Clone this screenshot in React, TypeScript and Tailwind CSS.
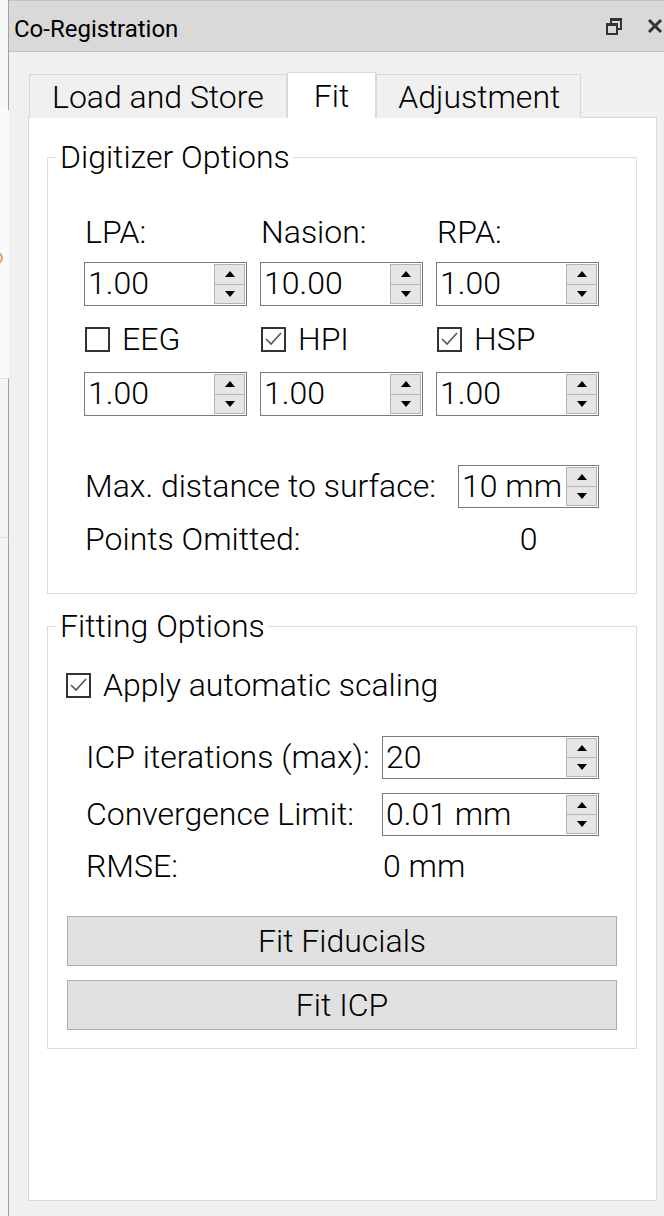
/**
 * Co-Registration dock: Fit tab with digitizer and fitting options.
 */

function Tri({ up }: { up?: boolean }) {
  return (
    <svg width="10" height="6" viewBox="0 0 10 6" className="block">
      <polygon points={up ? "5,0 10,6 0,6" : "0,0 10,0 5,6"} fill="#000" />
    </svg>
  );
}

function SpinBox({ value, tall, className }: { value: string; tall?: boolean; className?: string }) {
  return (
    <div className={`flex ${tall ? "h-[44px]" : "h-[43px]"} border border-[#7a7a7a] bg-white ${className ?? ""}`}>
      <div className="flex-1 overflow-hidden whitespace-nowrap pl-[3px] text-[32px] leading-[41px]">{value}</div>
      <div className="flex w-[32px] flex-col py-px pr-px">
        <div className="flex flex-1 items-center justify-center border border-[#b4b4b4] bg-[#e6e6e6]">
          <Tri up />
        </div>
        <div className="flex flex-1 items-center justify-center border border-t-0 border-[#b4b4b4] bg-[#e6e6e6]">
          <Tri />
        </div>
      </div>
    </div>
  );
}

function CheckBox({ checked, label, className }: { checked?: boolean; label: string; className?: string }) {
  return (
    <div className={`flex h-[33px] items-center ${className ?? ""}`}>
      <div className="h-[25px] w-[25px] border-2 border-[#333] bg-white">
        {checked && (
          <svg viewBox="0 0 21 21" className="h-full w-full">
            <polyline points="3,10 8,15 18,4" fill="none" stroke="#555" strokeWidth="1.6" />
          </svg>
        )}
      </div>
      <span className="ml-[12px] text-[32px] leading-[33px]">{label}</span>
    </div>
  );
}

function Group({ title, className, children }: { title: string; className?: string; children: React.ReactNode }) {
  return (
    <fieldset className={`border border-[#dcdcdc] ${className ?? ""}`}>
      <legend className="ml-[9px] px-[3px] text-[32px] leading-[32px]">{title}</legend>
      {children}
    </fieldset>
  );
}

function TitleBar() {
  return (
    <div className="flex h-[52px] items-center border-y border-[#c4c4c4] bg-[#d9d9d9] pl-[5px] pr-[1px]">
      <span className="flex-1 pt-[5px] text-[24px]">Co-Registration</span>
      <svg width="18" height="18" viewBox="0 0 18 18" className="mr-[24px]">
        <path d="M6 6 V2 H16 V12 H12" fill="none" stroke="#333" strokeWidth="2" />
        <rect x="5" y="1" width="12" height="3" fill="#333" />
        <rect x="2" y="7" width="10" height="10" fill="#d9d9d9" stroke="#333" strokeWidth="2" />
        <rect x="1" y="6" width="12" height="3" fill="#333" />
      </svg>
      <svg width="16" height="16" viewBox="0 0 16 16">
        <path d="M2 2 L14 14 M14 2 L2 14" stroke="#333" strokeWidth="3" />
      </svg>
    </div>
  );
}

function Tabs() {
  return (
    <div className="relative z-10 -mb-px ml-px flex h-[46px] items-end text-[32px] font-light">
      <div className="flex h-[44px] items-center border border-b-0 border-[#d9d9d9] bg-[#f0f0f0] px-[22px]">Load and Store</div>
      <div className="flex h-[46px] items-center border border-b-0 border-[#d9d9d9] bg-white px-[26px]">Fit</div>
      <div className="flex h-[44px] items-center border border-b-0 border-[#d9d9d9] bg-[#f0f0f0] pl-[21px] pr-[20px]">Adjustment</div>
    </div>
  );
}

function DigitizerOptions() {
  return (
    <Group title="Digitizer Options">
      <div className="pb-[37px] pl-[36px] pr-[37px] pt-[43px]">
        <div className="grid grid-cols-[163px_163px_163px] gap-x-[13px]">
          <div className="pl-px text-[32px] leading-[33px]">LPA:</div>
          <div className="pl-px text-[32px] leading-[33px]">Nasion:</div>
          <div className="pl-px text-[32px] leading-[33px]">RPA:</div>
          <SpinBox value="1.00" tall className="mt-[13px]" />
          <SpinBox value="10.00" tall className="mt-[13px]" />
          <SpinBox value="1.00" tall className="mt-[13px]" />
          <CheckBox label="EEG" className="mt-[17px] pl-px" />
          <CheckBox label="HPI" checked className="mt-[17px] pl-px" />
          <CheckBox label="HSP" checked className="mt-[17px] pl-px" />
          <SpinBox value="1.00" tall className="mt-[16px]" />
          <SpinBox value="1.00" tall className="mt-[16px]" />
          <SpinBox value="1.00" tall className="mt-[16px]" />
        </div>
        <div className="mt-[49px] grid grid-cols-[374px_141px] items-center">
          <div className="pl-px text-[32px] leading-[33px]">Max. distance to surface:</div>
          <SpinBox value="10 mm" />
          <div className="mt-[15px] pl-px text-[32px] leading-[33px]">Points Omitted:</div>
          <div className="mt-[15px] text-center text-[32px] leading-[33px]">0</div>
        </div>
      </div>
    </Group>
  );
}

function FittingOptions() {
  return (
    <Group title="Fitting Options" className="mt-[16px]">
      <div className="pb-[18px] pl-[18px] pr-[19px] pt-[27px]">
        <CheckBox label="Apply automatic scaling" checked />
        <div className="mt-[34px] grid grid-cols-[297px_217px] items-center gap-y-[14px] pl-[19px]">
          <div className="pl-px text-[32px] leading-[33px]">ICP iterations (max):</div>
          <SpinBox value="20" />
          <div className="pl-px text-[32px] leading-[33px]">Convergence Limit:</div>
          <SpinBox value="0.01 mm" />
          <div className="pl-px text-[32px] leading-[33px]">RMSE:</div>
          <div className="pl-px text-[32px] leading-[33px]">0 mm</div>
        </div>
        <div className="mt-[33px] flex flex-col gap-[14px] pl-px">
          <button className="h-[50px] border border-[#adadad] bg-[#e1e1e1] text-[32px] font-light">Fit Fiducials</button>
          <button className="h-[50px] border border-[#adadad] bg-[#e1e1e1] text-[32px] font-light">Fit ICP</button>
        </div>
      </div>
    </Group>
  );
}

export default function App() {
  return (
    <div className="flex h-[1216px] w-[664px] overflow-hidden bg-[#f0f0f0] font-['Roboto','Liberation_Sans',sans-serif] font-light text-black">
      <div className="flex w-[9px] flex-col">
        <div className="h-[110px] border-r border-[#a0a0a0] bg-[#f7f7f7]" />
        <div className="relative h-[268px] overflow-hidden bg-[#fafafa]">
          <div className="absolute left-[-9px] top-[142px] h-[12px] w-[12px] rounded-full border-2 border-[#d9a05a]" />
        </div>
        <div className="h-[159px] border-r border-t border-[#a0a0a0] border-t-[#e2e2e2] bg-[#f5f5f5]" />
        <div className="flex-1 border-r border-t border-[#a0a0a0] border-t-[#e2e2e2] bg-[#f5f5f5]" />
      </div>
      <div className="flex flex-1 flex-col">
        <div className="font-normal">
          <TitleBar />
        </div>
        <div className="flex flex-1 flex-col pb-[15px] pl-[19px] pr-[7px] pt-[20px]">
          <Tabs />
          <div className="flex-1 border border-[#d9d9d9] bg-white pl-[18px] pr-[19px] pt-[23px]">
            <DigitizerOptions />
            <FittingOptions />
          </div>
        </div>
      </div>
    </div>
  );
}
